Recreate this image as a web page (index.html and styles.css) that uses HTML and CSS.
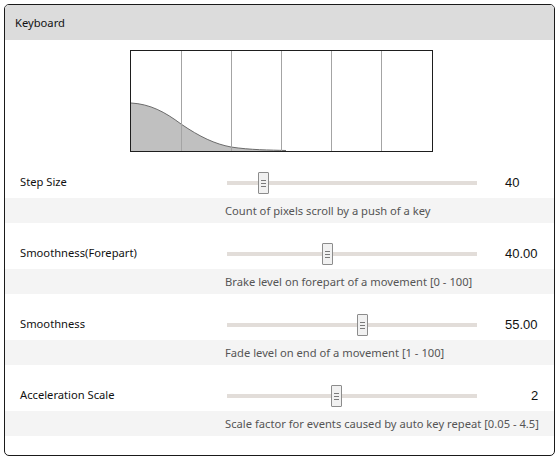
FILE: index.html
```html
<!DOCTYPE html>
<html>
<head>
<meta charset="utf-8">
<link rel="stylesheet" href="styles.css">
</head>
<body>
<div class="panel">
  <div class="header">Keyboard</div>
  <div class="graph-wrap">
    <svg class="graph" width="303" height="102" viewBox="0 0 303 102">
      <path d="M1,53 C20,54 35,62 51,74 C70,87 85,94 101,97 C120,100 140,100 156,100.5 L156,101 L1,101 Z" fill="#c0c0c0"/>
      <path d="M1,53 C20,54 35,62 51,74 C70,87 85,94 101,97 C120,100 140,100 156,100.5" fill="none" stroke="#6a6a6a" stroke-width="1"/>
      <g stroke="#a4a4a4" stroke-width="1">
        <line x1="51.5" y1="1" x2="51.5" y2="101"/>
        <line x1="101.5" y1="1" x2="101.5" y2="101"/>
        <line x1="151.5" y1="1" x2="151.5" y2="101"/>
        <line x1="201.5" y1="1" x2="201.5" y2="101"/>
        <line x1="251.5" y1="1" x2="251.5" y2="101"/>
      </g>
      <rect x="0.5" y="0.5" width="302" height="101" fill="none" stroke="#1e1e1e" stroke-width="1"/>
    </svg>
  </div>

  <div class="row">
    <div class="main">
      <div class="label">Step Size</div>
      <div class="slider"><div class="track"></div><div class="thumb" style="left:31px"><i></i><i></i><i></i></div></div>
      <div class="value">40</div>
    </div>
    <div class="desc">Count of pixels scroll by a push of a key</div>
  </div>

  <div class="row">
    <div class="main">
      <div class="label">Smoothness(Forepart)</div>
      <div class="slider"><div class="track"></div><div class="thumb" style="left:95px"><i></i><i></i><i></i></div></div>
      <div class="value">40.00</div>
    </div>
    <div class="desc">Brake level on forepart of a movement [0 - 100]</div>
  </div>

  <div class="row">
    <div class="main">
      <div class="label">Smoothness</div>
      <div class="slider"><div class="track"></div><div class="thumb" style="left:130px"><i></i><i></i><i></i></div></div>
      <div class="value">55.00</div>
    </div>
    <div class="desc">Fade level on end of a movement [1 - 100]</div>
  </div>

  <div class="row">
    <div class="main">
      <div class="label">Acceleration Scale</div>
      <div class="slider"><div class="track"></div><div class="thumb" style="left:104px"><i></i><i></i><i></i></div></div>
      <div class="value v2">2</div>
    </div>
    <div class="desc">Scale factor for events caused by auto key repeat [0.05 - 4.5]</div>
  </div>
</div>
</body>
</html>
```
FILE: styles.css
```css
html, body {
  margin: 0;
  padding: 0;
  background: #ffffff;
}
body {
  font-family: "Noto Sans", "Open Sans", sans-serif;
  font-size: 11.2px;
  color: #111;
}
.panel {
  margin: 4px;
  width: 549px;
  height: 450px;
  border: 1px solid #1a1a1a;
  border-radius: 5px;
  overflow: hidden;
  box-sizing: content-box;
}
.header {
  height: 35px;
  background: #dcdcdc;
  display: flex;
  align-items: center;
  padding-left: 10px;
  color: #111;
}
.graph-wrap {
  padding: 10px 0 12px 125px;
}
.graph {
  display: block;
}
.row {
  display: flex;
  flex-direction: column;
  margin-bottom: 12px;
}
.main {
  height: 34px;
  display: grid;
  grid-template-columns: 207px 250px 28px 1fr;
  align-items: center;
  padding-left: 15px;
}
.label {
  grid-column: 1;
  color: #111;
  white-space: nowrap;
}
.slider {
  grid-column: 2;
  position: relative;
  height: 22px;
  margin-top: 6px;
}
.track {
  position: absolute;
  left: 0;
  right: 0;
  top: 8px;
  height: 4px;
  background: #e2ddd9;
}
.thumb {
  position: absolute;
  top: -1px;
  width: 9px;
  height: 20px;
  background: #f1f1f1;
  border: 1px solid #8c8c8c;
  border-radius: 1px;
  display: flex;
  flex-direction: column;
  align-items: center;
  justify-content: center;
  gap: 2px;
}
.thumb i {
  display: block;
  width: 5px;
  height: 1px;
  background: #7a7a7a;
}
.value {
  grid-column: 4;
  font-family: "Liberation Sans", Arial, sans-serif;
  font-size: 13px;
  color: #111;
  padding-top: 2px;
}
.v2 {
  padding-left: 26px;
}
.desc {
  height: 25px;
  background: #f4f4f4;
  display: flex;
  align-items: center;
  padding-left: 220px;
  color: #555;
  white-space: nowrap;
}
```
